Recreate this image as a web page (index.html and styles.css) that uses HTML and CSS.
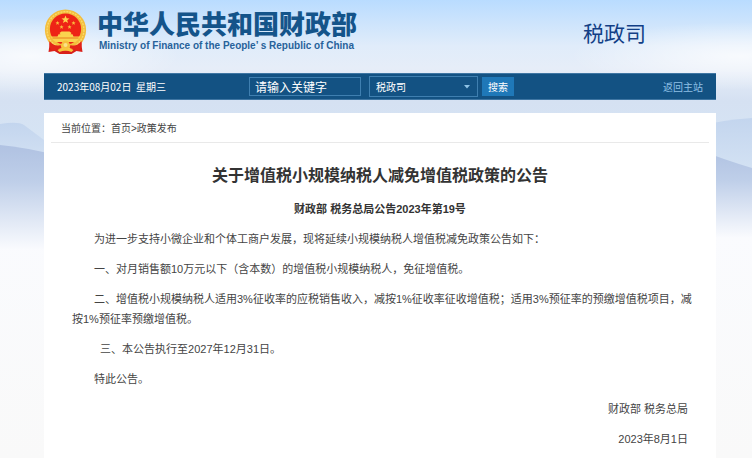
FILE: index.html
```html
<!DOCTYPE html>
<html lang="zh-CN">
<head>
<meta charset="utf-8">
<title>关于增值税小规模纳税人减免增值税政策的公告</title>
<link rel="stylesheet" href="styles.css">
</head>
<body>
<div class="page">
  <svg class="scenery" viewBox="0 0 752 458" preserveAspectRatio="none" aria-hidden="true">
    <defs>
      <linearGradient id="sky" x1="0" y1="0" x2="0" y2="1">
        <stop offset="0" stop-color="#b9dcff"/>
        <stop offset=".05" stop-color="#cde4fc"/>
        <stop offset=".1" stop-color="#e0ecfa"/>
        <stop offset=".15" stop-color="#e6edf8"/>
        <stop offset=".22" stop-color="#d5e1f2"/>
        <stop offset=".3" stop-color="#d6e4f4"/>
        <stop offset=".5" stop-color="#fafbfe"/>
        <stop offset="1" stop-color="#f9f9f9"/>
      </linearGradient>
      <linearGradient id="far" x1="0" y1="0" x2="0" y2="1">
        <stop offset="0" stop-color="#c3d5ee"/>
        <stop offset="1" stop-color="#d6e4f4"/>
      </linearGradient>
      <linearGradient id="near" x1="0" y1="0" x2="0" y2="1">
        <stop offset="0" stop-color="#b0c2e2"/>
        <stop offset=".35" stop-color="#bfcfe9"/>
        <stop offset="1" stop-color="#fafbfe"/>
      </linearGradient>
      <radialGradient id="glow">
        <stop offset="0" stop-color="#fff" stop-opacity=".75"/>
        <stop offset="1" stop-color="#fff" stop-opacity="0"/>
      </radialGradient>
    </defs>
    <rect width="752" height="458" fill="url(#sky)"/>
    <ellipse cx="30" cy="56" rx="150" ry="38" fill="url(#glow)"/>
    <ellipse cx="740" cy="56" rx="170" ry="34" fill="url(#glow)"/>
    <path d="M0 124Q18 121 24 125L44 140L60 146V170H0Z" fill="url(#far)"/>
    <path d="M0 145Q24 147 60 156V250H0Z" fill="url(#near)"/>
    <path d="M700 126Q722 120 752 118V178H700Z" fill="url(#far)"/>
    <path d="M700 150Q722 159 752 168V238H700Z" fill="url(#near)"/>
  </svg>

  <header class="masthead">
    <a class="brand" href="#">
      <svg class="emblem" viewBox="0 0 42 46" role="img" aria-label="国徽">
        <path d="M6 29L4 43L10 42L15 45H27L32 42L38 43L36 29Z" fill="#d9201a"/>
        <circle cx="21" cy="21" r="20.6" fill="#f3bd3c"/>
        <circle cx="21" cy="21" r="18.4" fill="none" stroke="#fbd968" stroke-width="1.4" stroke-dasharray="2 1"/>
        <circle cx="21" cy="20" r="15.6" fill="#ee2416"/>
        <path d="M21 6.5L22.1 9.3L25 9.4L22.7 11.2L23.5 14L21 12.4L18.5 14L19.3 11.2L17 9.4L19.9 9.3Z" fill="#ffd34d"/>
        <g fill="#f9b83c">
          <path d="M13 12l.6 1.3 1.5.1-1.1.9.4 1.5-1.4-.9-1.3.9.4-1.5-1.1-.9 1.4-.1z"/>
          <path d="M29 12l.6 1.3 1.5.1-1.1.9.4 1.5-1.4-.9-1.3.9.4-1.5-1.1-.9 1.4-.1z"/>
          <path d="M17 16l.6 1.3 1.5.1-1.1.9.4 1.5-1.4-.9-1.3.9.4-1.5-1.1-.9 1.4-.1z"/>
          <path d="M25 16l.6 1.3 1.5.1-1.1.9.4 1.5-1.4-.9-1.3.9.4-1.5-1.1-.9 1.4-.1z"/>
        </g>
        <path d="M15 24L17 22.5H25L27 24L26 25.3H28L29 27.6H36Q34 31 31 33H11Q8 31 6 27.6H13L14 25.3H16Z" fill="#fad34e"/>
        <path d="M8 29H34" stroke="#e8801f"/>
        <path d="M5 32Q10 38 16 36L17 39L8 42Q4 38 5 32ZM37 32Q32 38 26 36L25 39L34 42Q38 38 37 32Z" fill="#e32319"/>
        <circle cx="21" cy="36" r="4.4" fill="#f6c13d"/>
        <circle cx="21" cy="36" r="2" fill="#fbe188"/>
        <path d="M13 41Q21 37 29 41L27 43Q21 40 15 43Z" fill="#f8c73e"/>
      </svg>
      <span class="names">
        <span class="name-zh">中华人民共和国财政部</span>
        <span class="name-en">Ministry of Finance of the People’ s Republic of China</span>
      </span>
    </a>
    <span class="department">税政司</span>
  </header>

  <div class="toolbar">
    <span class="date">2023年08月02日&nbsp; 星期三</span>
    <form class="search">
      <input class="keyword" type="text" placeholder="请输入关键字" aria-label="关键字">
      <span class="picker">
        <select class="scope" aria-label="搜索范围"><option>税政司</option></select>
        <svg class="caret" viewBox="0 0 6 4" aria-hidden="true"><path d="M0 0H6L3 3.5Z" fill="#8fc3e6"/></svg>
      </span>
      <button class="submit" type="button">搜索</button>
    </form>
    <a class="home" href="#">返回主站</a>
  </div>

  <main class="sheet">
    <nav class="crumbs" aria-label="当前位置">当前位置：<a href="#">首页</a>&gt;<a href="#">政策发布</a></nav>
    <article class="notice">
      <h1>关于增值税小规模纳税人减免增值税政策的公告</h1>
      <h2>财政部 税务总局公告2023年第19号</h2>
      <div class="text">
        <p>为进一步支持小微企业和个体工商户发展，现将延续小规模纳税人增值税减免政策公告如下：</p>
        <p>一、对月销售额10万元以下（含本数）的增值税小规模纳税人，免征增值税。</p>
        <p>二、增值税小规模纳税人适用3%征收率的应税销售收入，减按1%征收率征收增值税；适用3%预征率的预缴增值税项目，减按1%预征率预缴增值税。</p>
        <p>&nbsp; 三、本公告执行至2027年12月31日。</p>
        <p>特此公告。</p>
        <p class="signed">财政部 税务总局</p>
        <p class="signed">2023年8月1日</p>
      </div>
    </article>
  </main>
</div>
</body>
</html>
```
FILE: styles.css
```css
* { box-sizing: border-box; }

body {
  margin: 0;
  background: #fff;
  color: #333;
  font-family: "Liberation Sans", "Noto Sans CJK SC", sans-serif;
  font-size: 11px;
}

a { color: inherit; text-decoration: none; }

.page {
  position: relative;
  isolation: isolate;
  padding: 0 36px 0 44px;
}

.scenery {
  position: absolute;
  inset: 0;
  z-index: -1;
  width: 100%;
  height: 100%;
}

.masthead {
  display: flex;
  align-items: center;
  justify-content: space-between;
  height: 73px;
  padding: 0 70px 10px 0;
}

.brand { display: flex; align-items: center; gap: 10px; color: #14548a; }
.emblem { width: 43px; height: 46px; }
.names { display: flex; flex-direction: column; }

.name-zh {
  font-family: "Noto Sans CJK SC", sans-serif;
  font-size: 26px;
  font-weight: 900;
  line-height: 28px;
}

.name-en {
  padding-left: 2px;
  color: #27629a;
  font-size: 10px;
  font-weight: 700;
  line-height: 18px;
}

.department {
  color: #123f86;
  font-family: "Noto Sans CJK SC", sans-serif;
  font-size: 21px;
  line-height: 28px;
}

.toolbar {
  display: grid;
  grid-template-columns: 192px auto 1fr;
  align-items: center;
  height: 27px;
  padding: 0 13px;
  border-top: 1px solid #3f76a3;
  border-bottom: 1px solid #3f76a3;
  background: #135283;
  color: #fff;
  font-family: "Noto Sans CJK SC", sans-serif;
  font-size: 10px;
}

.search { display: flex; align-items: center; margin: 0; }

.keyword, .scope, .submit {
  height: 19px;
  margin: 0;
  border: 1px solid #3f7fb0;
  border-radius: 0;
  background: transparent;
  color: #fff;
  font: inherit;
}

.keyword { width: 112px; padding: 0 5px; font-size: 12px; }
.keyword::placeholder { color: #fff; opacity: 1; }
.picker { position: relative; display: flex; margin-left: 8px; }
.scope { width: 109px; height: 21px; padding: 0 6px; appearance: none; }
.scope option { color: #333; }
.caret { position: absolute; top: 9px; right: 8px; width: 6px; height: 4px; pointer-events: none; }
.submit { width: 32px; margin-left: 4px; padding: 0; border-color: #1f78b8; background: #1f78b8; }
.home { justify-self: end; color: #8fc0e6; }

.sheet {
  margin-top: 13px;
  padding: 0 7px 9px;
  background: #fff;
}

.crumbs {
  padding: 3px 10px 0;
  border-bottom: 1px solid #e9e9e9;
  color: #444;
  font-size: 10px;
  line-height: 26px;
}

.notice { padding-top: 20px; color: #444; line-height: 20px; }
.notice h1, .notice h2 { margin: 0; color: #333; text-align: center; }
.notice h1 { font-size: 16px; line-height: 26px; }
.notice h2 { margin: 10px 0; font-size: 11px; }
.text { padding: 0 16px 0 21px; }
.text p { margin: 0 0 10px; text-indent: 2em; }
.text p:last-child { margin-bottom: 0; }
.text .signed { padding-right: 5px; text-align: right; }
```
